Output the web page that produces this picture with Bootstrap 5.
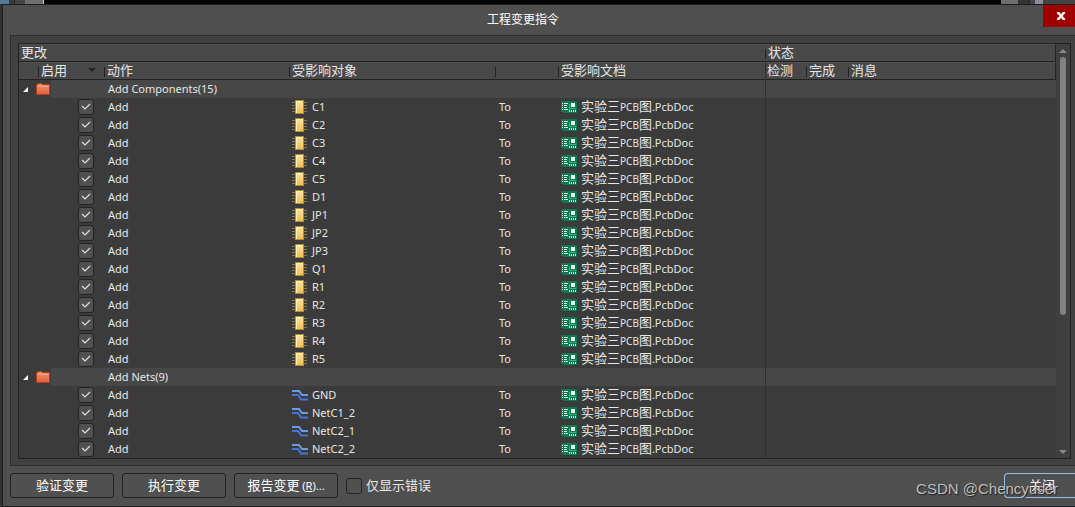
<!DOCTYPE html>
<html lang="zh-CN">
<head>
<meta charset="utf-8">
<meta name="viewport" content="width=device-width, initial-scale=1">
<title>工程变更指令</title>
<link href="https://cdn.jsdelivr.net/npm/bootstrap@5.3.0/dist/css/bootstrap.min.css" rel="stylesheet">
<style>
  body { background: #323232; color: #e6e6e6; font: 11px/16px "Noto Sans", "Noto Sans CJK SC", sans-serif; overflow: hidden; }
  .cjk { font: 13px/16px "Noto Sans CJK SC", sans-serif; }
  .backdrop-strip { height: 4px; background: #000; }
  .backdrop-strip .tabs { width: 44px; background: linear-gradient(90deg, #55789a 9px, #3a3a3a 9px 14px, #222 14px 15px, #444 15px 25px, #716d6c 25px 43px, #ccc 43px); }
  .backdrop-strip .tools { width: 74px; background: linear-gradient(90deg, #716d6c 17px, #333 17px 28px, #222 28px 29px, #444 29px 34px, #8a8f9b 34px 42px, #444 42px); }
  .dialog { margin-left: 2px; background: #4f4f4f; border: 1px solid #1c1c1c; border-right: 0; }
  .titlebar { height: 30px; }
  .titlebar h1 { font: 12px/28px "Noto Sans CJK SC", sans-serif; color: #fff; }
  .close-x { width: 32px; height: 22px; background: #a00000; border: 0; padding: 0 0 0 4px; }
  .panel { margin-left: 7px; padding: 7px 4px 6px 7px; background: #414141; border: 1px solid #2c2c2c; border-right: 0; }
  .viewer { border: 1px solid #222; background: #3b3b3b; }
  .changes { table-layout: fixed; border-collapse: separate; border-spacing: 0; }
  .changes th, .changes td { height: 18px; padding: 0 0 0 4px; font-weight: 400; white-space: nowrap; vertical-align: middle; }
  .changes th { padding: 0 0 2px 2px; background: #484848; border-bottom: 1px solid #222; border-top: 1px solid #515151; line-height: 14px; }
  .changes th.cut { background: linear-gradient(#222, #222) 0 4px / 1px 10px no-repeat #484848; padding-left: 3px; }
  .changes th:last-child { border-right: 1px solid #222; }
  .changes td.doc { padding-left: 3px; }
  .changes td.doc .cjk { line-height: 12px; }
  .changes .state { border-left: 1px solid #303030; padding-left: 1px; }
  .changes .group td { background: #474747; }
  .changes .group td:first-child { background: #3b3b3b; position: relative; z-index: 1; }
  .changes .group td:nth-child(2) { background: linear-gradient(90deg, #3b3b3b 13px, #474747 13px); }
  .branch { gap: 8px; width: 27px; }
  .kind { width: 20px; }
  .pcb { font-size: 10px; }
  .changes svg { display: block; flex: none; }
  .tick { appearance: none; display: block; width: 16px; height: 16px; margin: 0; border: 1px solid #242424; border-radius: 3px; background: #505050; }
  .tick:checked { background: #505050 url("data:image/svg+xml,%3Csvg xmlns='http://www.w3.org/2000/svg' viewBox='0 0 14 14'%3E%3Cpath d='M3 6l3 3 5-5' fill='none' stroke='%23ddd' stroke-width='1.2'/%3E%3C/svg%3E") center / 14px 14px no-repeat; }
  .changes .tick { margin-left: 36px; }
  .scroller { width: 14px; padding: 5px 0 4px; background: #3f3f3f; }
  .thumb { width: 6px; height: 258px; border-radius: 3px; background: #818181; }
  .foot { padding: 7px 0 8px 7px; position: relative; }
  .foot label { padding-bottom: 2px; }
  .cmd { width: 104px; height: 25px; padding: 0 0 2px; border: 1px solid #242424; border-radius: 3px; background: #505050; color: #fff; }
  .cmd small { font: 11px/14px "Noto Sans", sans-serif; }
  .cmd-close { width: 71px; border-color: #98bfe8; border-right: 0; border-radius: 4px 0 0 4px; padding-left: 4px; }
  .watermark { position: absolute; right: 17px; top: 12px; font: 15px/22px "Liberation Sans", sans-serif; color: #bcbcbc; text-shadow: 1px 1px 1px #222; pointer-events: none; }
</style>
</head>
<body>
<svg width="0" height="0" class="position-absolute" aria-hidden="true">
  <defs>
    <linearGradient id="gold" x2="0" y2="1"><stop stop-color="#ffe3a0"/><stop offset="1" stop-color="#f0bf54"/></linearGradient>
    <linearGradient id="coral" x2="0" y2="1"><stop stop-color="#f5926b"/><stop offset="1" stop-color="#e0603f"/></linearGradient>
  </defs>
  <symbol id="chip" viewBox="0 0 15 14">
    <path d="M0 2.500h15M0 5.500h15M0 8.500h15M0 11.500h15" stroke="#8a7840"/>
    <rect x="3.500" y=".5" width="8" height="13" fill="url(#gold)" stroke="#b78c2d"/>
    <path d="M4.500 13V1.500H11" fill="none" stroke="#fff0c2"/>
  </symbol>
  <symbol id="net" viewBox="0 0 16 11">
    <path d="M0 1h7l3 4h6" fill="none" stroke="#6a9be6" stroke-width="2"/>
    <path d="M0 5h6l3 4.500h7" fill="none" stroke="#4574d8" stroke-width="2"/>
  </symbol>
  <symbol id="board" viewBox="0 0 16 12">
    <path d="M0 0h16v12H2v-1H0z" fill="#0b7a51"/>
    <path d="M1 2.500h1M1 4.500h1M1 6.500h1M1 8.500h1M3 2.500h4M3 4.500h3M3 6.500h3M3 8.500h4M8.500 9v2M10.500 9v2M12.500 9v2M14.500 9v2" stroke="#d9f4e6"/>
    <path d="M10 2h4v4h-4z" fill="#eafff5"/><path d="M8.500 3v4.500H15" fill="none" stroke="#2fb583"/>
  </symbol>
  <symbol id="folder" viewBox="0 0 14 12">
    <path d="M.5 11.500v-10h1l1-1h3l1 1h7v10z" fill="url(#coral)" stroke="#b83a1c"/>
    <path d="M1.500 3.500h11" stroke="#f8a986"/>
  </symbol>
</svg>

<div class="backdrop-strip d-flex justify-content-between"><div class="tabs"></div><div class="tools"></div></div>

<main class="dialog">
  <header class="titlebar d-flex align-items-start">
    <h1 class="flex-grow-1 text-center m-0">工程变更指令</h1>
    <button type="button" class="close-x d-flex align-items-center justify-content-center" aria-label="关闭窗口">
      <svg width="10" height="8" viewBox="0 0 10 8"><path d="M1.500 0l7 8M8.500 0l-7 8" stroke="#fff" stroke-width="2.500"/></svg>
    </button>
  </header>

  <section class="panel">
    <div class="viewer d-flex">
      <div class="flex-fill">
        <table class="changes w-100">
          <colgroup>
            <col style="width:19px"><col style="width:66px"><col style="width:185px"><col style="width:206px"><col style="width:63px"><col style="width:207px"><col style="width:41px"><col style="width:42px"><col>
          </colgroup>
          <thead class="cjk">
            <tr><th colspan="6">更改</th><th colspan="3" class="cut">状态</th></tr>
            <tr>
              <th></th>
              <th class="cut"><div class="d-flex justify-content-between align-items-center pe-2">启用<svg width="8" height="4" viewBox="0 0 8 4"><path d="M0 0h8L4 4z" fill="#222"/></svg></div></th>
              <th class="cut">动作</th><th class="cut">受影响对象</th><th class="cut"></th><th class="cut">受影响文档</th>
              <th class="state">检测</th><th class="cut">完成</th><th class="cut">消息</th>
            </tr>
          </thead>
          <tbody id="rows"></tbody>
        </table>
      </div>
      <div class="scroller d-flex flex-column flex-shrink-0 align-items-center">
        <svg width="8" height="4" viewBox="0 0 8 4"><path d="M0 4h8L4 0z" fill="#888"/></svg>
        <div class="thumb mt-1 mb-auto"></div>
        <svg width="8" height="4" viewBox="0 0 8 4"><path d="M0 0h8L4 4z" fill="#888"/></svg>
      </div>
    </div>
  </section>

  <footer class="foot d-flex align-items-center gap-2">
    <button type="button" class="cmd cjk">验证变更</button>
    <button type="button" class="cmd cjk">执行变更</button>
    <button type="button" class="cmd cjk">报告变更 <small>(<u>R</u>)...</small></button>
    <div class="d-flex align-items-center">
      <input class="tick me-1" type="checkbox" id="onlyErrors"><label class="cjk" for="onlyErrors">仅显示错误</label>
    </div>
    <button type="button" class="cmd cmd-close cjk ms-auto">关闭</button>
    <span class="watermark">CSDN @Chencyuser</span>
  </footer>
</main>

<script src="https://cdn.jsdelivr.net/npm/bootstrap@5.3.0/dist/js/bootstrap.bundle.min.js"></script>
<script>
  const groups = [
    { title: 'Add Components(15)', icon: 'chip', w: 15, h: 14, items: ['C1','C2','C3','C4','C5','D1','JP1','JP2','JP3','Q1','R1','R2','R3','R4','R5'] },
    { title: 'Add Nets(9)', icon: 'net', w: 16, h: 11, items: ['GND','NetC1_2','NetC2_1','NetC2_2'] }
  ];
  const icon = (id, w, h) => `<svg width="${w}" height="${h}"><use href="#${id}"/></svg>`;
  document.getElementById('rows').innerHTML = groups.map(g => `
    <tr class="group">
      <td><div class="branch d-flex align-items-center"><svg width="5" height="5" viewBox="0 0 5 5"><path d="M5 0v5H0z" fill="#fff"/></svg>${icon('folder', 14, 12)}</div></td>
      <td></td>
      <td>${g.title}</td><td></td><td></td><td></td><td class="state"></td><td></td><td></td>
    </tr>` + g.items.map(name => `
    <tr>
      <td></td>
      <td><input class="tick" type="checkbox" checked aria-label="${name}"></td>
      <td>Add</td>
      <td class="doc"><div class="d-flex align-items-center"><span class="kind">${icon(g.icon, g.w, g.h)}</span>${name}</div></td>
      <td>To</td>
      <td class="doc"><div class="d-flex align-items-center gap-1">${icon('board', 16, 12)}<span><span class="cjk">实验三</span><span class="pcb">PCB</span><span class="cjk">图</span>.PcbDoc</span></div></td>
      <td class="state"></td><td></td><td></td>
    </tr>`).join('')).join('');
</script>
</body>
</html>
